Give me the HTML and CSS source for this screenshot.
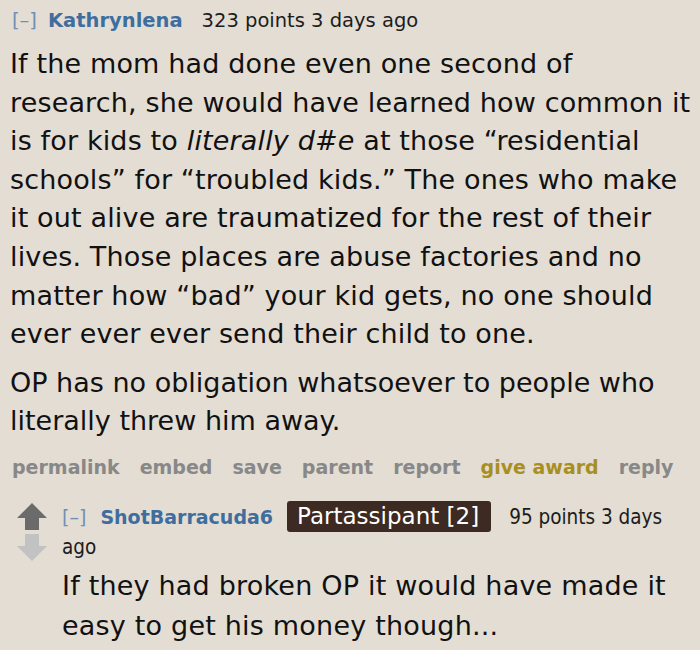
FILE: index.html
```html
<!DOCTYPE html>
<html>
<head>
<meta charset="utf-8">
<link rel="stylesheet" href="styles.css">
</head>
<body>
<div class="comment">
  <div class="tagline">
    <span class="collapse">[–]</span>
    <span class="author">Kathrynlena</span>
    <span class="score">323 points 3 days ago</span>
  </div>
  <div class="md">
    <p class="p-wide">If the mom had done even one second of research, she would have learned how common it is for kids to <em>literally d#e</em> at those “residential schools” for “troubled kids.” The ones who make it out alive are traumatized for the rest of their lives. Those places are abuse factories and no matter how “bad” your kid gets, no one should ever ever ever send their child to one.</p>
    <p class="p-cond">OP has no obligation whatsoever to people who literally threw him away.</p>
  </div>
  <ul class="buttons">
    <li>permalink</li>
    <li>embed</li>
    <li>save</li>
    <li>parent</li>
    <li>report</li>
    <li class="award">give award</li>
    <li>reply</li>
  </ul>
</div>
<div class="comment child">
  <div class="votes">
    <svg class="arrow" width="30" height="27" viewBox="0 0 30 27"><path d="M15 0 L30 15 L22 15 L22 27 L8 27 L8 15 L0 15 Z" fill="#6b6b6b"/></svg>
    <svg class="arrow" width="30" height="27" viewBox="0 0 30 27"><path d="M8 0 L22 0 L22 12 L30 12 L15 27 L0 12 L8 12 Z" fill="#c2c2c2"/></svg>
  </div>
  <div class="entry">
    <div class="tagline2">
      <span class="collapse">[–]</span>
      <span class="author">ShotBarracuda6</span>
      <span class="flair">Partassipant [2]</span>
      <span class="score">95 points 3 days ago</span>
    </div>
    <p class="reply-text">If they had broken OP it would have made it easy to get his money though...</p>
  </div>
</div>
</body>
</html>
```
FILE: styles.css
```css
html, body {
  margin: 0;
  padding: 0;
  background: #e3ddd4;
  color: #111;
  font-family: "DejaVu Sans", Verdana, sans-serif;
}
.comment {
  padding-left: 12px;
}
.tagline {
  font-size: 19.5px;
  line-height: 24px;
  padding-top: 9px;
  display: flex;
  align-items: baseline;
}
.collapse {
  color: #7090b8;
  font-weight: normal;
  margin-right: 11px;
}
.author {
  color: #3e6d9e;
  font-weight: bold;
  margin-right: 19px;
}
.score {
  color: #1c1c1c;
}
.md {
  margin-top: 12px;
  margin-left: -2px;
}
.md p {
  margin: 0;
  font-size: 27px;
  line-height: 38.6px;
}
.p-wide {
  width: 690px;
  letter-spacing: 0.15px;
}
.p-cond {
  letter-spacing: 0;
  margin-top: 10px !important;
}
.buttons {
  list-style: none;
  margin: 11px 0 0;
  padding: 0;
  display: flex;
  gap: 20px;
  font-weight: bold;
  font-size: 19px;
  line-height: 30px;
  color: #888888;
}
.buttons .award {
  color: #a88f22;
}
.child {
  display: flex;
  padding-left: 17px;
  margin-top: 19px;
}
.votes {
  display: flex;
  flex-direction: column;
  gap: 4px;
  padding-top: 2px;
  width: 45px;
  flex: none;
}
.entry {
  width: 625px;
}
.tagline2 {
  font-size: 19px;
  line-height: 30px;
}
.tagline2 .collapse {
  margin-right: 8px;
}
.tagline2 .author {
  margin-right: 8px;
}
.tagline2 .score {
  margin-left: 12px;
  font-family: "DejaVu Sans Condensed", "DejaVu Sans", sans-serif;
  font-size: 20.5px;
}
.flair {
  background: #3d2a22;
  color: #ffffff;
  font-size: 23px;
  padding: 2px 12px 3px 10px;
  border-radius: 3px;
}
.reply-text {
  margin: 4px 0 0;
  font-size: 27px;
  line-height: 40px;
  letter-spacing: 0.2px;
}
```
